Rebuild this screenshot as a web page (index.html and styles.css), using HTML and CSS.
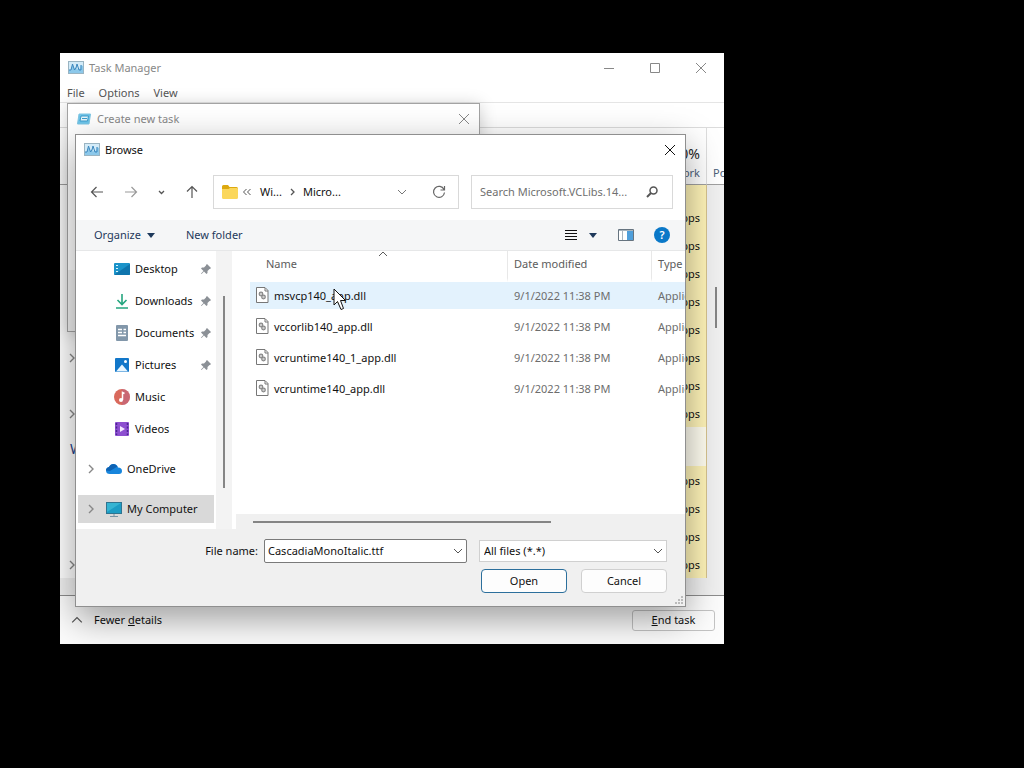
FILE: index.html
```html
<!DOCTYPE html>
<html lang="en">
<head>
  <meta charset="UTF-8" />
  <meta name="viewport" content="width=device-width, initial-scale=1.0"/>
  <title>Task Manager</title>
  <link rel="stylesheet" href="styles.css">
</head>
<body>
  <!-- shared icons -->
  <svg class="sprite" aria-hidden="true">
    <symbol id="i-monitor" viewBox="0 0 16 14">
      <rect x=".5" y=".5" width="15" height="12" fill="#d3ebf8" stroke="#9ab4c2"/>
      <path d="M1 9H3L4.500 3L6 8L8 6L9 9L10 7L12 8L13 4L15 5V12H1Z" fill="#8cc8ea"/>
      <path d="M1 9H3L4.500 3L6.500 9L8 7L9 3L11 9H13V4" fill="none" stroke="#3a86bd"/>
    </symbol>
    <symbol id="i-close" viewBox="0 0 12 12"><path d="M1 1L11 11M11 1L1 11" fill="none" stroke="currentColor"/></symbol>
    <symbol id="i-down" viewBox="0 0 10 6"><path d="M1 1L5 5L9 1" fill="none" stroke="currentColor"/></symbol>
    <symbol id="i-up" viewBox="0 0 10 6"><path d="M1 5L5 1L9 5" fill="none" stroke="currentColor"/></symbol>
    <symbol id="i-right" viewBox="0 0 6 10"><path d="M1 1L5 5L1 9" fill="none" stroke="currentColor" stroke-width="1.4"/></symbol>
    <symbol id="i-caret" viewBox="0 0 8 5"><path d="M0 0H8L4 5Z" fill="currentColor"/></symbol>
    <symbol id="i-pin" viewBox="0 0 12 12"><path d="M7 1L11 5L10 6L9.500 6L7.500 8L7.500 10L6.500 11L4 8.500L1.500 11L1 10.500L3.500 8L1 5.500L2 4.500H4L6 2.500V2Z" fill="#8b9096"/></symbol>
    <symbol id="i-dll" viewBox="0 0 13 17">
      <path d="M.5 .5H9L12 3.500V15.500H.5Z" fill="#fff" stroke="#777"/>
      <path d="M9 1V4H12" fill="none" stroke="#777"/>
      <circle cx="5" cy="7" r="1.800" fill="#ccc" stroke="#888" stroke-width="1.200"/>
      <circle cx="7.500" cy="10" r="1.800" fill="#ccc" stroke="#888" stroke-width="1.200"/>
    </symbol>
  </svg>

  <div class="window task-manager">
    <header class="titlebar">
      <svg class="app-icon"><use href="#i-monitor"/></svg>
      <span class="title">Task Manager</span>
      <button class="win-btn" aria-label="Minimize"><svg width="12" height="12"><path d="M1 6.500H11" stroke="currentColor"/></svg></button>
      <button class="win-btn" aria-label="Maximize"><svg width="12" height="12"><path d="M1.500 1.500H10.500V10.500H1.500Z" fill="none" stroke="currentColor"/></svg></button>
      <button class="win-btn" aria-label="Close"><svg width="12" height="12"><use href="#i-close"/></svg></button>
    </header>
    <nav class="menu">
      <button>File</button>
      <button>Options</button>
      <button>View</button>
    </nav>
    <div class="tabs"></div>
    <div class="processes">
      <table class="process-table">
        <colgroup><col><col class="col-net"><col class="col-power"></colgroup>
        <thead>
          <tr><th></th><th><b>0%</b>Network</th><th>Power usage</th></tr>
        </thead>
        <tbody>
          <tr class="partial"><td></td><td></td><td></td></tr>
          <tr><td></td><td>0 Mbps</td><td></td></tr>
          <tr><td></td><td>0 Mbps</td><td></td></tr>
          <tr><td></td><td>0 Mbps</td><td></td></tr>
          <tr><td></td><td>0 Mbps</td><td></td></tr>
          <tr><td></td><td>0 Mbps</td><td></td></tr>
          <tr><td><svg class="chev"><use href="#i-right"/></svg></td><td>0 Mbps</td><td></td></tr>
          <tr><td></td><td>0 Mbps</td><td></td></tr>
          <tr><td><svg class="chev"><use href="#i-right"/></svg></td><td>0 Mbps</td><td></td></tr>
          <tr class="group"><td>Windows processes</td><td></td><td></td></tr>
          <tr><td></td><td>0 Mbps</td><td></td></tr>
          <tr><td></td><td>0 Mbps</td><td></td></tr>
          <tr><td></td><td>0 Mbps</td><td></td></tr>
          <tr><td><svg class="chev"><use href="#i-right"/></svg></td><td>0 Mbps</td><td></td></tr>
        </tbody>
      </table>
      <div class="thumb"></div>
    </div>
    <div class="bottom-scroll"></div>
    <footer class="tm-footer">
      <button class="fewer"><svg width="12" height="8"><use href="#i-up"/></svg><span>Fewer <u>d</u>etails</span></button>
      <button class="end-task"><span><u>E</u>nd task</span></button>
    </footer>
  </div>

  <div class="window new-task">
    <header class="titlebar">
      <svg width="14" height="12" viewBox="0 0 14 12">
        <path d="M2 1H13.500L12 11H.5Z" fill="#6cc4ea" stroke="#7fc6e3"/>
        <path d="M4 3H11.500L10.500 8H3Z" fill="#e6f6fc" stroke="#3c9ccb"/>
        <path d="M5 5.500H10" stroke="#3c9ccb"/>
      </svg>
      <span class="title">Create new task</span>
      <button class="win-btn" aria-label="Close"><svg width="12" height="12"><use href="#i-close"/></svg></button>
    </header>
    <div class="new-task-body"></div>
    <div class="new-task-footer"></div>
  </div>

  <div class="window browse">
    <header class="titlebar">
      <svg class="app-icon"><use href="#i-monitor"/></svg>
      <span class="title">Browse</span>
      <button class="win-btn" aria-label="Close"><svg width="12" height="12"><use href="#i-close"/></svg></button>
    </header>

    <div class="navbar">
      <div class="nav-btns">
        <button aria-label="Back"><svg width="14" height="12"><path d="M13 6H1.500M6.500 1L1.500 6L6.500 11" fill="none" stroke="#555" stroke-width="1.200"/></svg></button>
        <button aria-label="Forward"><svg width="14" height="12"><path d="M1 6H12.500M7.500 1L12.500 6L7.500 11" fill="none" stroke="#999" stroke-width="1.200"/></svg></button>
        <button class="recent" aria-label="Recent locations"><svg width="7" height="5"><path d="M1 1L3.500 3.500L6 1" fill="none" stroke="#555" stroke-width="1.300"/></svg></button>
        <button aria-label="Up"><svg width="12" height="14"><path d="M6 13V1.500M1 6.500L6 1.500L11 6.500" fill="none" stroke="#555" stroke-width="1.200"/></svg></button>
      </div>
      <div class="address">
        <svg width="16" height="14" viewBox="0 0 16 14">
          <path d="M0 1.500Q0 0 1.500 0H6L7.500 2H14.500Q16 2 16 3.500V6H0Z" fill="#dda90f"/>
          <path d="M0 4H6.500L8 3H15Q16 3 16 4V12.500Q16 14 14.500 14H1.500Q0 14 0 12.500Z" fill="#fbd75b"/>
        </svg>
        <svg width="10" height="8"><path d="M4.500 1L1.500 4L4.500 7M8.500 1L5.500 4L8.500 7" fill="none" stroke="#555"/></svg>
        <button class="crumb">Wi...</button>
        <svg width="5" height="8"><path d="M1 1L4 4L1 7" fill="none" stroke="#555" stroke-width="1.300"/></svg>
        <button class="crumb last">Micro...</button>
        <button class="drop" aria-label="Previous locations"><svg width="10" height="6"><use href="#i-down"/></svg></button>
        <button class="refresh" aria-label="Refresh"><svg width="14" height="14"><path d="M12 4.500A5.500 5.500 0 1 0 12.500 7.500M12.500 1V5H8.500" fill="none" stroke="#666" stroke-width="1.200"/></svg></button>
      </div>
      <div class="search">
        <input type="text" aria-label="Search" placeholder="Search Microsoft.VCLibs.14...">
        <svg width="12" height="12"><circle cx="7.500" cy="4.500" r="3.500" fill="none" stroke="#555" stroke-width="1.500"/><path d="M5 7L1 11" stroke="#555" stroke-width="2"/></svg>
      </div>
    </div>

    <div class="toolbar">
      <button class="organize">Organize <svg width="8" height="5"><use href="#i-caret"/></svg></button>
      <button class="new-folder">New folder</button>
      <button aria-label="Change view"><svg width="12" height="11"><path d="M0 .5H12M0 3.500H12M0 6.500H12M0 9.500H12" stroke="#111"/></svg></button>
      <button class="view-more" aria-label="More view options"><svg width="8" height="5"><use href="#i-caret"/></svg></button>
      <button class="preview" aria-label="Preview pane"><svg width="16" height="12"><path d="M.5 .5H15.500V11.500H.5Z" fill="#fff" stroke="#667480"/><path d="M1 1.500H15" stroke="#a9b5bf"/><path d="M4.500 2V11" stroke="#a9b5bf"/><path d="M9 2H15V11H9Z" fill="#4f9fdb"/></svg></button>
      <button class="help" aria-label="Help">?</button>
    </div>

    <div class="content">
      <ul class="sidebar">
        <li>
          <svg class="icon" viewBox="0 0 16 16"><rect y="2" width="16" height="12" rx="1" fill="#1b93c9"/><path d="M0 14L16 3V13Q16 14 15 14Z" fill="#0f75ad"/><path d="M2 4.500H4M2 7.500H4M2 10.500H4" stroke="#d8f6ff"/></svg>
          <a href="#">Desktop</a><svg class="pin"><use href="#i-pin"/></svg>
        </li>
        <li>
          <svg class="icon" viewBox="0 0 16 16"><path d="M8 1V11M3.500 7L8 11.500L12.500 7M2 15H14" fill="none" stroke="#25a67f" stroke-width="1.600"/></svg>
          <a href="#">Downloads</a><svg class="pin"><use href="#i-pin"/></svg>
        </li>
        <li>
          <svg class="icon" viewBox="0 0 16 16"><rect x="2" y="0" width="12" height="16" rx="1" fill="#8297aa"/><path d="M4 4.500H8M4 7.500H8M4 10.500H12M9.500 4.500H12M9.500 7.500H12" stroke="#fff" stroke-width="1.500"/></svg>
          <a href="#">Documents</a><svg class="pin"><use href="#i-pin"/></svg>
        </li>
        <li>
          <svg class="icon" viewBox="0 0 16 16"><rect x="1" y="1" width="14" height="14" rx="1" fill="#1277c9"/><path d="M2 14.500L8 7.500L14 14.500Z" fill="#e8f6ff"/><circle cx="11.500" cy="4.500" r="1.500" fill="#fff"/></svg>
          <a href="#">Pictures</a><svg class="pin"><use href="#i-pin"/></svg>
        </li>
        <li>
          <svg class="icon" viewBox="0 0 16 16"><circle cx="8" cy="8" r="8" fill="#d9695c"/><path d="M8 0A8 8 0 0 1 16 8A8 8 0 0 1 8 16Z" fill="#b9668a" opacity=".5"/><path d="M8.500 11V3.500L10.500 4.500" fill="none" stroke="#fff" stroke-width="1.500"/><circle cx="7" cy="11" r="2" fill="#fff"/></svg>
          <a href="#">Music</a>
        </li>
        <li>
          <svg class="icon" viewBox="0 0 16 16"><rect x="1" y="1" width="14" height="14" rx="1" fill="#8d4fd0"/><path d="M2.500 2V14M13.500 2V14" stroke="#4b2591" stroke-width="1.500" stroke-dasharray="2 1.500"/><path d="M6 5L11 8L6 11Z" fill="#f3e8ff"/></svg>
          <a href="#">Videos</a>
        </li>
        <li class="root">
          <svg class="chev"><use href="#i-right"/></svg>
          <svg class="icon" viewBox="0 0 16 16"><path d="M4 13Q0 13 0 9.500Q0 6.500 3 6Q4.500 3 7.500 3Q11 3 12 6.500Q16 6.500 16 10Q16 13 13 13Z" fill="#1785dc"/><path d="M0 9.500Q0 6.500 3 6Q4.500 3 7.500 3Q10 3 11.500 5.500L4 10Z" fill="#0e62b3"/></svg>
          <a href="#">OneDrive</a>
        </li>
        <li class="root selected">
          <svg class="chev"><use href="#i-right"/></svg>
          <svg class="icon" viewBox="0 0 16 16"><rect x=".5" y="1.500" width="15" height="11" fill="#1c9cc4" stroke="#2f7490"/><path d="M1 2H15L1 11Z" fill="#35b4d2"/><path d="M8 13V15M4 15.500H12" stroke="#7793a3"/></svg>
          <a href="#">My Computer</a>
        </li>
      </ul>
      <div class="side-scroll"><div class="side-thumb"></div></div>
      <div class="files">
        <table class="file-table">
          <colgroup><col class="col-name"><col class="col-date"><col></colgroup>
          <thead>
            <tr><th class="sorted">Name<svg class="sort"><use href="#i-up"/></svg></th><th>Date modified</th><th>Type</th></tr>
          </thead>
          <tbody>
            <tr class="hover"><td><svg class="dll"><use href="#i-dll"/></svg><span>msvcp140_app.dll</span></td><td>9/1/2022 11:38 PM</td><td>Application</td></tr>
            <tr><td><svg class="dll"><use href="#i-dll"/></svg><span>vccorlib140_app.dll</span></td><td>9/1/2022 11:38 PM</td><td>Application</td></tr>
            <tr><td><svg class="dll"><use href="#i-dll"/></svg><span>vcruntime140_1_app.dll</span></td><td>9/1/2022 11:38 PM</td><td>Application</td></tr>
            <tr><td><svg class="dll"><use href="#i-dll"/></svg><span>vcruntime140_app.dll</span></td><td>9/1/2022 11:38 PM</td><td>Application</td></tr>
          </tbody>
        </table>
        <div class="file-scroll"><div class="file-thumb"></div></div>
      </div>
    </div>

    <footer class="dialog-footer">
      <div class="fields">
        <label for="filename">File name:</label>
        <div class="combo">
          <input type="text" id="filename" value="CascadiaMonoItalic.ttf">
          <button aria-label="Recent file names"><svg width="10" height="6"><use href="#i-down"/></svg></button>
        </div>
        <div class="filter">
          <select aria-label="File type"><option>All files (*.*)</option></select>
          <svg width="10" height="6"><use href="#i-down"/></svg>
        </div>
      </div>
      <div class="actions">
        <button class="primary">Open</button>
        <button>Cancel</button>
      </div>
      <svg class="grip" width="9" height="9"><path d="M7 1H9M4 4H6M7 4H9M1 7H3M4 7H6M7 7H9" stroke="#bbb" stroke-width="2"/></svg>
    </footer>
  </div>

  <svg class="cursor" width="14" height="23"><path d="M1 1V17L4.500 13.500L8 21.500L10.500 20.500L7.500 12.500H12.500Z" fill="#fff" stroke="#111"/></svg>
</body>
</html>
```
FILE: styles.css
```css
* {
  box-sizing: border-box;
  padding: 0;
  margin: 0;
}

body {
  position: relative;
  min-height: 100vh;
  overflow: hidden;
  background: #000;
  color: #111;
  font-family: "Noto Sans", "Open Sans", sans-serif;
  font-size: 11px;
  line-height: 16px;
}

button,
input,
select {
  font: inherit;
  color: inherit;
  border: none;
  background: none;
  outline: none;
}

button {
  display: flex;
  align-items: center;
  justify-content: center;
}

a {
  color: inherit;
  text-decoration: none;
}

svg {
  flex: none;
}

.sprite {
  position: absolute;
  width: 0;
  height: 0;
}

/* windows */
.window {
  position: absolute;
  display: flex;
  flex-direction: column;
  background: #fff;
}

.task-manager {
  left: 60px;
  top: 53px;
  width: 664px;
  overflow: hidden;
}

.new-task {
  left: 67px;
  top: 103px;
  width: 413px;
  border: 1px solid #a3a3a3;
  box-shadow: 0 2px 16px rgba(0,0,0,0.2);
}

.browse {
  left: 75px;
  top: 134px;
  width: 611px;
  border: 1px solid #8f8f8f;
  box-shadow: 0 12px 34px rgba(0,0,0,0.38);
}

.titlebar {
  display: flex;
  align-items: center;
  height: 30px;
  padding-left: 8px;
}

.app-icon {
  width: 16px;
  height: 14px;
}

.title {
  flex: 1;
  padding-left: 5px;
}

.task-manager .titlebar,
.new-task .titlebar {
  color: #888;
}

.new-task .titlebar {
  padding-left: 9px;
}

.new-task .title {
  padding-left: 6px;
}

.win-btn {
  width: 46px;
  height: 30px;
}

.new-task .win-btn,
.browse .win-btn {
  width: 30px;
}

/* task manager */
.menu {
  display: flex;
  gap: 14px;
  height: 19px;
  padding-left: 7px;
  color: #555;
}

.tabs {
  height: 26px;
  border-top: 1px solid #e5e5e5;
  border-bottom: 1px solid #dcdcdc;
}

.processes {
  position: relative;
}

.process-table {
  width: 100%;
  table-layout: fixed;
  border-collapse: separate;
  border-spacing: 0;
}

.col-net {
  width: 70px;
}

.col-power {
  width: 17px;
}

.process-table th {
  height: 57px;
  padding: 0 6px 3px;
  border-bottom: 1px solid #a0a0a0;
  border-right: 1px solid #ddd;
  color: #4c607a;
  font-weight: 400;
  text-align: right;
  vertical-align: bottom;
  white-space: nowrap;
}

.process-table th:first-child {
  border-right: none;
}

.process-table th:last-child {
  border-right: none;
  text-align: left;
}

.process-table b {
  display: block;
  color: #222;
  font-size: 14px;
  font-weight: 400;
  line-height: 22px;
}

.process-table td {
  height: 28px;
  padding: 1px 6px 0;
  background: #fff4b8;
  text-align: right;
}

.process-table td:nth-child(2) {
  border-right: 1px solid #d6c38e;
}

.process-table td:first-child {
  background: #fff;
  text-align: left;
}

.process-table td:last-child {
  background: #f0f0f0;
}

.process-table .partial td {
  height: 18px;
}

.process-table .group td {
  height: 39px;
  padding: 5px 10px 0;
  background: #fffdf0;
  color: #1f3f87;
  font-size: 14px;
}

.process-table .group td:first-child {
  background: #fff;
}

.process-table .group td:last-child {
  background: #f0f0f0;
}

.chev {
  display: block;
  width: 6px;
  height: 10px;
  color: #888;
}

.process-table .chev {
  margin-left: 3px;
}

.thumb {
  position: absolute;
  right: 7px;
  top: 159px;
  width: 2px;
  height: 41px;
  background: #858585;
}

.bottom-scroll {
  height: 18px;
  background: #f0f0f0;
  border-bottom: 1px solid #8c8c8c;
}

.tm-footer {
  display: flex;
  align-items: center;
  justify-content: space-between;
  height: 48px;
  padding: 0 9px 0 11px;
  background: #fcfcfc;
}

.fewer {
  gap: 11px;
}

.fewer svg {
  color: #555;
}

.end-task {
  width: 83px;
  height: 21px;
  border: 1px solid #c4c4c4;
  border-radius: 3px;
  background: rgba(255,255,255,0.4);
}

/* create new task */
.new-task-body {
  height: 136px;
}

.new-task-footer {
  height: 61px;
  background: #f0f0f0;
}

/* browse dialog */
.navbar {
  display: flex;
  align-items: center;
  gap: 12px;
  height: 55px;
  padding: 0 12px 1px 4px;
}

.nav-btns {
  display: flex;
  margin-right: -8px;
}

.nav-btns button {
  width: 34px;
  height: 34px;
}

.nav-btns .recent {
  width: 27px;
}

.address {
  display: flex;
  flex: 1;
  align-items: center;
  height: 34px;
  padding: 0 12px 0 8px;
  border: 1px solid #d9d9d9;
}

.address > svg {
  margin-right: 4px;
}

.crumb {
  margin: 0 8px 0 4px;
}

.crumb.last {
  margin: 0 auto 0 4px;
}

.drop {
  margin-right: 25px;
  color: #777;
}

.search {
  display: flex;
  align-items: center;
  width: 202px;
  height: 34px;
  padding: 0 14px 0 8px;
  border: 1px solid #d9d9d9;
}

.search input {
  flex: 1;
  min-width: 0;
}

.search input::placeholder {
  color: #707070;
  opacity: 1;
}

.toolbar {
  display: flex;
  align-items: center;
  height: 31px;
  padding: 0 15px 0 18px;
  background: #f5f6f7;
  border-bottom: 1px solid #e6e7e8;
  color: #1e395b;
}

.organize {
  gap: 6px;
}

.new-folder {
  margin: 0 auto 0 31px;
}

.view-more {
  margin: 0 21px 0 12px;
}

.preview {
  margin-right: 20px;
}

.help {
  width: 16px;
  height: 16px;
  border-radius: 50%;
  background: #0a78c8;
  color: #fff;
  font-weight: 600;
}

.content {
  display: flex;
  height: 278px;
}

.sidebar {
  width: 140px;
  padding: 4px 2px 0;
  list-style: none;
}

.sidebar li {
  display: flex;
  align-items: center;
  height: 28px;
  margin-bottom: 4px;
  padding: 0 2px 0 36px;
}

.sidebar .root {
  margin-top: 12px;
  padding-left: 10px;
}

.sidebar .selected {
  background: #d9d9d9;
}

.icon {
  width: 16px;
  height: 16px;
}

.sidebar a {
  flex: 1;
  padding-left: 5px;
}

.sidebar .chev {
  margin-right: 12px;
}

.pin {
  width: 12px;
  height: 12px;
}

.side-scroll {
  width: 16px;
  padding: 45px 0 0 7px;
  background: #f3f3f3;
}

.side-thumb {
  width: 2px;
  height: 192px;
  background: #858585;
}

.files {
  display: flex;
  flex: 1;
  flex-direction: column;
  justify-content: space-between;
  min-width: 0;
  overflow: hidden;
}

.file-table {
  table-layout: fixed;
  width: calc(100% - 18px);
  margin-left: 18px;
  border-collapse: separate;
  border-spacing: 0;
}

.col-name {
  width: 258px;
}

.col-date {
  width: 144px;
}

.file-table th {
  height: 31px;
  padding: 0 6px 1px;
  border-right: 1px solid #e8e8e8;
  border-bottom: 4px solid #fff;
  color: #5c5c5c;
  font-weight: 400;
  text-align: left;
  white-space: nowrap;
}

.file-table th.sorted {
  position: relative;
  padding-left: 16px;
}

.sort {
  position: absolute;
  left: 128px;
  top: 0;
  width: 10px;
  height: 6px;
}

.file-table td {
  height: 31px;
  padding: 0 6px;
  border-bottom: 4px solid #fff;
  background-clip: padding-box;
  color: #6d6d6d;
  white-space: nowrap;
  overflow: hidden;
}

.file-table td:first-child {
  color: #111;
}

.file-table .hover td {
  background-color: #e3f2fd;
}

.file-table th:last-child {
  border-right: none;
}

.dll {
  width: 13px;
  height: 17px;
  margin-right: 5px;
}

.dll,
.dll + span {
  vertical-align: middle;
}

.file-scroll {
  height: 15px;
  margin-left: 4px;
  padding: 7px 0 0 17px;
  background: #f0f0f0;
}

.file-thumb {
  width: 298px;
  height: 2px;
  background: #858585;
}

.dialog-footer {
  position: relative;
  display: flex;
  flex-direction: column;
  gap: 6px;
  padding: 10px 18px 13px;
  background: #f0f0f0;
}

.fields,
.actions {
  display: flex;
  align-items: center;
  justify-content: flex-end;
}

.combo,
.filter {
  display: flex;
  align-items: center;
  height: 24px;
  background: #fff;
}

.combo {
  width: 203px;
  margin: 0 12px 0 6px;
  padding: 0 3px;
  border: 1px solid #7a7a7a;
  border-radius: 2px;
  color: #111;
}

.combo input {
  flex: 1;
  min-width: 0;
}

.filter {
  position: relative;
  width: 188px;
  height: 22px;
  border: 1px solid #d0d0d0;
}

.filter select {
  width: 100%;
  height: 20px;
  padding: 0 20px 0 4px;
  appearance: none;
}

.filter svg {
  position: absolute;
  right: 3px;
  top: 7px;
  pointer-events: none;
}

.combo svg,
.filter svg {
  color: #555;
}

.actions {
  gap: 14px;
}

.actions button {
  width: 86px;
  height: 24px;
  border: 1px solid #d0d0d0;
  border-radius: 4px;
  background: #fdfdfd;
}

.actions .primary {
  border-color: #2c6f9c;
}

.grip {
  position: absolute;
  right: 2px;
  bottom: 1px;
}

.cursor {
  position: absolute;
  left: 333px;
  top: 288px;
}
```
